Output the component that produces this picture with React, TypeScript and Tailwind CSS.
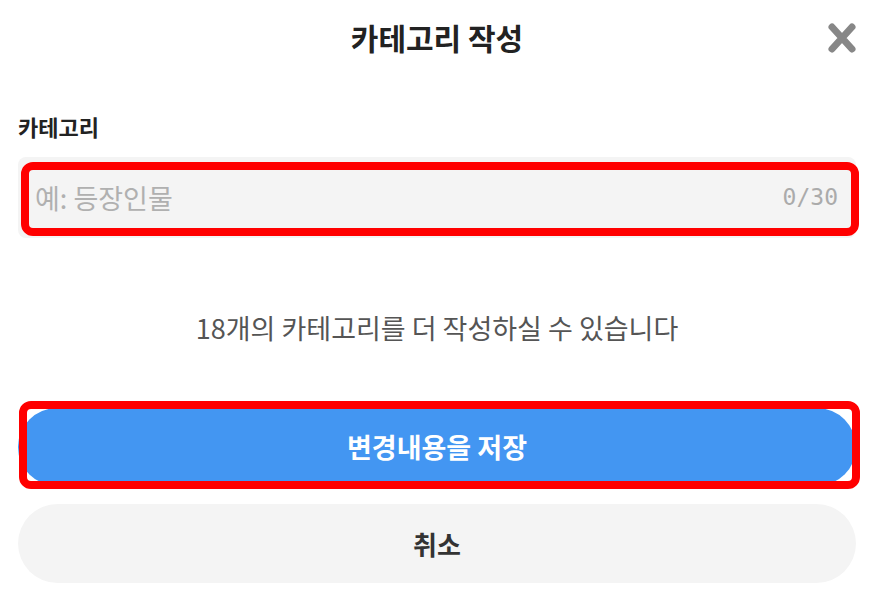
const font = { fontFamily: '"Noto Sans CJK KR", "Noto Sans", sans-serif' };

function CloseIcon() {
  return (
    <svg width="30" height="32" viewBox="0 0 30 32" fill="none">
      <path d="M5 5 L25 27 M25 5 L5 27" stroke="#878787" strokeWidth="7" strokeLinecap="round" />
    </svg>
  );
}

export default function App() {
  return (
    <div className="min-h-[616px] w-[886px] bg-white pl-[18px] pr-[30px] text-[#222]" style={font}>
      <header className="relative flex h-[74px] items-center justify-center">
        <h1 className="text-[30px] font-bold leading-none text-[#222]">카테고리 작성</h1>
        <button aria-label="닫기" className="absolute right-[-1px] top-[22px]">
          <CloseIcon />
        </button>
      </header>

      <label className="mt-[38px] block text-[22px] font-bold leading-[28px] text-[#222]">카테고리</label>

      <div className="relative mt-[17px] flex h-[81px] items-center justify-between rounded-[8px] bg-[#f4f4f4] pl-[17px] pr-[18px]">
        <span className="text-[27px] leading-none text-[#b0b0b0]">예: 등장인물</span>
        <span className="text-[23px] leading-none text-[#ababab]" style={{ fontFamily: '"DejaVu Sans Mono", monospace' }}>
          0/30
        </span>
        <div className="pointer-events-none absolute -right-[3px] bottom-[2px] left-[3px] top-[5px] rounded-[12px] border-[8px] border-[#ff0000]" />
      </div>

      <p className="mt-[72px] text-center text-[27px] leading-[36px] text-[#555]">
        18개의 카테고리를 더 작성하실 수 있습니다
      </p>

      <div className="relative mt-[62px]">
        <button className="flex h-[78px] w-full items-center justify-center rounded-full bg-[#4396f2] text-[27px] font-bold text-white">
          변경내용을 저장
        </button>
        <div className="pointer-events-none absolute -bottom-[3px] -right-[4px] -top-[7px] left-[1px] rounded-[12px] border-[8px] border-[#ff0000]" />
      </div>

      <button className="mt-[18px] flex h-[79px] w-full items-center justify-center rounded-full bg-[#f4f4f4] text-[26px] font-bold text-[#333]">
        취소
      </button>
    </div>
  );
}
